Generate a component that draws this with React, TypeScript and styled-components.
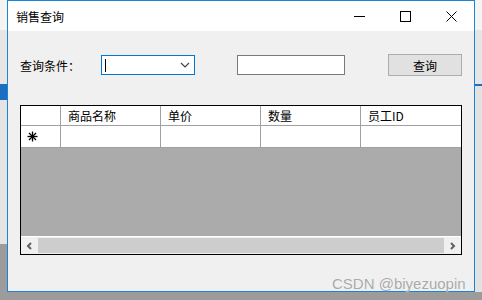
import React from "react";
import styled, { createGlobalStyle } from "styled-components";

const GlobalStyle = createGlobalStyle`
  html, body {
    margin: 0;
    padding: 0;
  }
  body {
    width: 482px;
    height: 300px;
    overflow: hidden;
    background:
      linear-gradient(
        to bottom,
        #f4f4f4 0px,
        #f4f4f4 30px,
        #e6e6e6 30px,
        #e6e6e6 84px,
        #1c6fbf 84px,
        #1c6fbf 100px,
        #e4e4e4 100px,
        #e4e4e4 244px,
        #9c9c9c 244px
      ) left top / 7px 100% no-repeat,
      linear-gradient(
        to bottom,
        #f4f4f4 0px,
        #f4f4f4 30px,
        #e6e6e6 30px,
        #e6e6e6 84px,
        #1c6fbf 84px,
        #1c6fbf 86px,
        #e2e2e2 86px,
        #e2e2e2 292px,
        #9c9c9c 292px
      );
    font-family: "Noto Sans CJK SC", "Noto Sans", sans-serif;
  }
`;

const columns = ["商品名称", "单价", "数量", "员工ID"];

const Page = styled.div`
  position: relative;
  width: 482px;
  height: 300px;
`;

const Window = styled.div`
  margin-left: 7px;
  width: 468px;
  height: 292px;
  box-sizing: border-box;
  border: 1px solid #1a84d6;
  display: flex;
  flex-direction: column;
  background: #f0f0f0;
`;

const TitleBar = styled.div`
  height: 30px;
  background: #ffffff;
  display: flex;
  align-items: center;
  padding-left: 8px;
`;

const Title = styled.div`
  flex: 1;
  font-size: 12px;
  color: #000;
`;

const TitleButton = styled.div`
  width: 46px;
  height: 30px;
  display: flex;
  align-items: center;
  justify-content: center;
`;

const Body = styled.div`
  flex: 1;
  padding: 23px 0 0 12px;
  display: flex;
  flex-direction: column;
`;

const FormRow = styled.div`
  display: flex;
  align-items: center;
  height: 22px;
`;

const Label = styled.div`
  width: 81px;
  font-size: 12px;
  color: #000;
`;

const Combo = styled.div`
  width: 94px;
  height: 20px;
  box-sizing: border-box;
  border: 1px solid #0078d7;
  background: #fff;
  display: flex;
  align-items: center;
  justify-content: space-between;
  padding: 0 4px 0 3px;
`;

const Caret = styled.div`
  width: 1px;
  height: 13px;
  background: #000;
`;

const TextBox = styled.div`
  margin-left: 42px;
  width: 108px;
  height: 20px;
  box-sizing: border-box;
  border: 1px solid #7a7a7a;
  background: #fff;
`;

const Button = styled.div`
  margin-left: 43px;
  width: 74px;
  height: 22px;
  box-sizing: border-box;
  border: 1px solid #adadad;
  background: #e1e1e1;
  font-size: 12px;
  display: flex;
  align-items: center;
  justify-content: center;
`;

const Grid = styled.div`
  margin-top: 29px;
  width: 442px;
  height: 150px;
  box-sizing: border-box;
  border: 1px solid #000;
  display: flex;
  flex-direction: column;
  background: #ababab;
`;

const GridRow = styled.div<{ $h: number }>`
  display: grid;
  grid-template-columns: 40px repeat(4, 100px);
  height: ${(p) => p.$h}px;
  background: #fff;
`;

const Cell = styled.div`
  box-sizing: border-box;
  border-right: 1px solid #a0a0a0;
  border-bottom: 1px solid #a0a0a0;
  font-size: 12px;
  color: #000;
  padding-left: 7px;
  display: flex;
  align-items: center;
  &:last-child {
    border-right: none;
  }
`;

const RowHead = styled(Cell)`
  padding-left: 6px;
`;

const Empty = styled.div`
  flex: 1;
`;

const ScrollBar = styled.div`
  height: 17px;
  border-top: 1px solid #fff;
  background: #f0f0f0;
  display: flex;
  align-items: center;
`;

const ScrollArrow = styled.div`
  width: 17px;
  height: 17px;
  display: flex;
  align-items: center;
  justify-content: center;
`;

const Thumb = styled.div`
  flex: 1;
  height: 15px;
  background: #cdcdcd;
`;

const Watermark = styled.div`
  position: absolute;
  left: 332px;
  top: 275px;
  font-family: "Liberation Sans", Arial, sans-serif;
  font-size: 15px;
  color: #a9a9a9;
  text-shadow: 0 0 1px #fff;
  white-space: nowrap;
`;

const Chevron = ({ dir }: { dir: "down" | "left" | "right" }) => {
  if (dir === "down")
    return (
      <svg width="10" height="6" viewBox="0 0 10 6">
        <path d="M1 1 L5 5 L9 1" fill="none" stroke="#444" strokeWidth="1.2" />
      </svg>
    );
  const d = dir === "left" ? "M5 1 L2 4 L5 7" : "M2 1 L5 4 L2 7";
  return (
    <svg width="7" height="8" viewBox="0 0 7 8">
      <path d={d} fill="none" stroke="#606060" strokeWidth="2" />
    </svg>
  );
};

const Star = () => (
  <svg width="11" height="11" viewBox="0 0 11 11">
    <g stroke="#000" strokeWidth="1.3">
      <line x1="5.5" y1="0.5" x2="5.5" y2="10.5" />
      <line x1="0.5" y1="5.5" x2="10.5" y2="5.5" />
      <line x1="2" y1="2" x2="9" y2="9" />
      <line x1="9" y1="2" x2="2" y2="9" />
    </g>
  </svg>
);

export default function App() {
  return (
    <Page>
      <GlobalStyle />
      <Window>
        <TitleBar>
          <Title>销售查询</Title>
          <TitleButton>
            <svg width="11" height="11" viewBox="0 0 11 11">
              <line x1="0" y1="5.5" x2="11" y2="5.5" stroke="#000" strokeWidth="1" />
            </svg>
          </TitleButton>
          <TitleButton>
            <svg width="11" height="11" viewBox="0 0 11 11">
              <rect x="0.5" y="0.5" width="10" height="10" fill="none" stroke="#000" strokeWidth="1" />
            </svg>
          </TitleButton>
          <TitleButton>
            <svg width="11" height="11" viewBox="0 0 11 11">
              <path d="M0.5 0.5 L10.5 10.5 M10.5 0.5 L0.5 10.5" stroke="#000" strokeWidth="1" />
            </svg>
          </TitleButton>
        </TitleBar>
        <Body>
          <FormRow>
            <Label>查询条件：</Label>
            <Combo>
              <Caret />
              <Chevron dir="down" />
            </Combo>
            <TextBox />
            <Button>查询</Button>
          </FormRow>
          <Grid>
            <GridRow $h={20}>
              <RowHead />
              {columns.map((c) => (
                <Cell key={c}>{c}</Cell>
              ))}
            </GridRow>
            <GridRow $h={22}>
              <RowHead>
                <Star />
              </RowHead>
              {columns.map((c) => (
                <Cell key={c} />
              ))}
            </GridRow>
            <Empty />
            <ScrollBar>
              <ScrollArrow>
                <Chevron dir="left" />
              </ScrollArrow>
              <Thumb />
              <ScrollArrow>
                <Chevron dir="right" />
              </ScrollArrow>
            </ScrollBar>
          </Grid>
        </Body>
      </Window>
      <Watermark>CSDN @biyezuopin</Watermark>
    </Page>
  );
}
